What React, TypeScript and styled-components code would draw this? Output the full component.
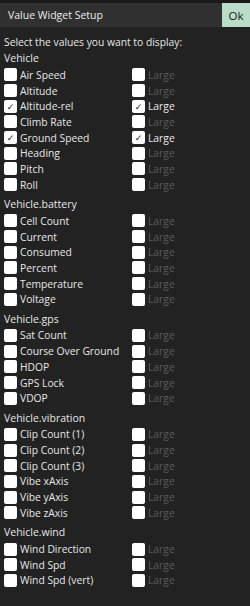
import React from 'react';
import styled, { createGlobalStyle } from 'styled-components';

const GlobalStyle = createGlobalStyle`
  html, body {
    margin: 0;
    padding: 0;
    background: #222222;
  }
  body {
    font-family: 'Open Sans', 'DejaVu Sans', sans-serif;
    color: #e6e6e6;
  }
`;

const Dialog = styled.div`
  width: 250px;
  height: 606px;
  background: #222222;
  border-top: 3px solid #1b1b1b;
  box-sizing: border-box;
  display: flex;
  flex-direction: column;
  overflow: hidden;
`;

const TitleBar = styled.div`
  height: 24px;
  background: #303030;
  display: flex;
  align-items: center;
  justify-content: space-between;
  flex-shrink: 0;
`;

const Title = styled.div`
  font-size: 10.5px;
  padding-left: 8px;
  color: #ececec;
`;

const OkButton = styled.div`
  width: 28px;
  height: 24px;
  background: #b9ddc6;
  color: #1a1a1a;
  font-size: 11.5px;
  display: flex;
  align-items: center;
  justify-content: center;
`;

const Body = styled.div`
  padding: 7px 0 0 4px;
  display: flex;
  flex-direction: column;
  font-size: 10.3px;
`;

const Intro = styled.div`
  height: 16px;
  line-height: 16px;
`;

const Group = styled.div`
  display: flex;
  flex-direction: column;
  margin-bottom: 3.5px;
`;

const GroupName = styled.div`
  height: 17px;
  line-height: 16px;
  font-size: 10.5px;
`;

const Row = styled.div`
  display: grid;
  grid-template-columns: 128px 1fr;
  height: 15.7px;
  align-items: center;
`;

const Cell = styled.div`
  display: flex;
  align-items: center;
  gap: 3px;
  white-space: nowrap;
`;

const Box = styled.span`
  width: 13px;
  height: 13px;
  border-radius: 2px;
  background: #ffffff;
  color: #222;
  font-size: 9px;
  display: flex;
  align-items: center;
  justify-content: center;
  flex-shrink: 0;
`;

const Label = styled.span<{ $dim?: boolean }>`
  color: ${({ $dim }) => ($dim ? '#5a5a5a' : '#e6e6e6')};
`;

type Item = { name: string; checked?: boolean };

const groups: { title: string; items: Item[] }[] = [
  {
    title: 'Vehicle',
    items: [
      { name: 'Air Speed' },
      { name: 'Altitude' },
      { name: 'Altitude-rel', checked: true },
      { name: 'Climb Rate' },
      { name: 'Ground Speed', checked: true },
      { name: 'Heading' },
      { name: 'Pitch' },
      { name: 'Roll' },
    ],
  },
  {
    title: 'Vehicle.battery',
    items: [
      { name: 'Cell Count' },
      { name: 'Current' },
      { name: 'Consumed' },
      { name: 'Percent' },
      { name: 'Temperature' },
      { name: 'Voltage' },
    ],
  },
  {
    title: 'Vehicle.gps',
    items: [
      { name: 'Sat Count' },
      { name: 'Course Over Ground' },
      { name: 'HDOP' },
      { name: 'GPS Lock' },
      { name: 'VDOP' },
    ],
  },
  {
    title: 'Vehicle.vibration',
    items: [
      { name: 'Clip Count (1)' },
      { name: 'Clip Count (2)' },
      { name: 'Clip Count (3)' },
      { name: 'Vibe xAxis' },
      { name: 'Vibe yAxis' },
      { name: 'Vibe zAxis' },
    ],
  },
  {
    title: 'Vehicle.wind',
    items: [
      { name: 'Wind Direction' },
      { name: 'Wind Spd' },
      { name: 'Wind Spd (vert)' },
    ],
  },
];

export default function App() {
  return (
    <>
      <GlobalStyle />
      <Dialog>
        <TitleBar>
          <Title>Value Widget Setup</Title>
          <OkButton>Ok</OkButton>
        </TitleBar>
        <Body>
          <Intro>Select the values you want to display:</Intro>
          {groups.map((g) => (
            <Group key={g.title}>
              <GroupName>{g.title}</GroupName>
              {g.items.map((it) => (
                <Row key={it.name}>
                  <Cell>
                    <Box>{it.checked ? '✓' : ''}</Box>
                    <Label>{it.name}</Label>
                  </Cell>
                  <Cell>
                    <Box>{it.checked ? '✓' : ''}</Box>
                    <Label $dim={!it.checked}>Large</Label>
                  </Cell>
                </Row>
              ))}
            </Group>
          ))}
        </Body>
      </Dialog>
    </>
  );
}
